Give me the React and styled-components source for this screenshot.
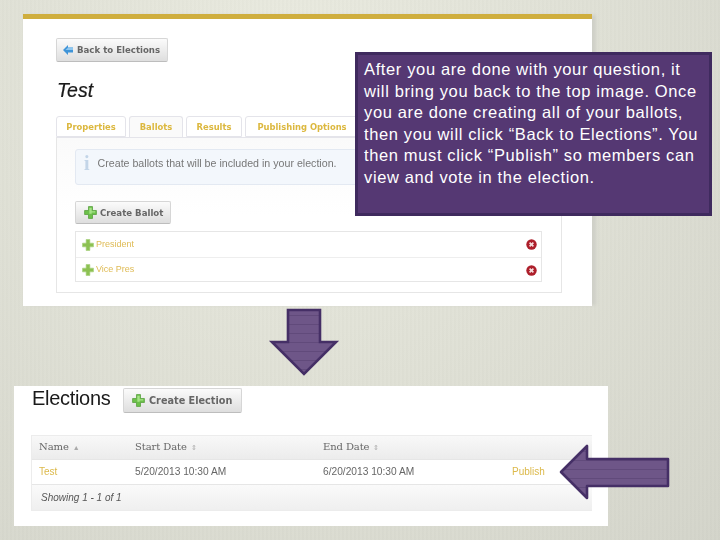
import React from "react";
import styled, { createGlobalStyle } from "styled-components";

const Global = createGlobalStyle`
  html, body { margin: 0; padding: 0; background: #dcddd2; }
  * { box-sizing: border-box; }
`;

const Slide = styled.div`
  position: relative;
  width: 720px;
  height: 540px;
  overflow: hidden;
  font-family: "Liberation Sans", Arial, sans-serif;
  background:
    repeating-linear-gradient(90deg, rgba(255,255,255,.025) 0 2px, rgba(0,0,0,.006) 2px 4px),
    radial-gradient(ellipse at 40% 12%, #e9eadf 0%, #dfe0d5 50%, #d3d4ca 100%);
`;

const TopShot = styled.section`
  position: absolute;
  left: 23px;
  top: 14px;
  width: 569px;
  height: 292px;
  background: #fff;
  border-top: 5px solid #cfae3e;
  padding: 19px 30px 0 33px;
  box-shadow: 5px 0 3px -1px #cfd0c8;
  filter: blur(0.3px);
`;

const Raised = styled.div`
  display: inline-flex;
  align-items: center;
  gap: ${p => p.$gap || 4}px;
  height: ${p => p.$h}px;
  width: ${p => p.$w}px;
  padding-left: ${p => p.$pad}px;
  border: 1px solid #d6d6d6;
  border-bottom-color: #bdbdbd;
  border-radius: 2px;
  background: linear-gradient(#fbfbfb, #dedede);
  color: #666;
  font-family: "DejaVu Sans", sans-serif;
  font-weight: 700;
  font-size: ${p => p.$fs || 8.6}px;
  white-space: nowrap;
`;

const Title = styled.h1`
  margin: 17px 0 0 1px;
  height: 37px;
  font: italic 400 19.5px/22px "Liberation Sans", sans-serif;
  -webkit-text-stroke: .2px #1a1a1a;
  color: #1a1a1a;
`;

const Tabs = styled.div`
  display: flex;
  height: 21px;
  gap: 3px;
`;

const Tab = styled.div`
  width: ${p => p.$w}px;
  border: 1px solid #e4e4ea;
  border-bottom: ${p => (p.$active ? "none" : "1px solid #e4e4ea")};
  border-radius: 3px 3px 0 0;
  background: ${p => (p.$active ? "#fafafa" : "#fff")};
  color: #dcb83f;
  font: 700 8.4px/20px "DejaVu Sans", sans-serif;
  text-align: center;
  white-space: nowrap;
`;

const TabBody = styled.div`
  width: 506px;
  height: 156px;
  border: 1px solid #e6e6e6;
  border-top: 1px solid #e4e4ea;
  background: linear-gradient(#fafafa, #fff 50%);
  padding: 11px 19px 0 18px;
`;

const Info = styled.div`
  display: flex;
  align-items: center;
  height: 36px;
  padding: 0 0 8px 8px;
  gap: 8px;
  border: 1px solid #e3e9f2;
  border-radius: 3px;
  background: #f3f7fc;
  color: #777;
  font-size: 10.65px;
  white-space: nowrap;
`;

const InfoMark = styled.span`
  color: #c3d5e8;
  font: 700 20px/20px "Liberation Serif", serif;
`;

const BallotButtonRow = styled.div`
  margin-top: 16px;
  height: 30px;
`;

const List = styled.div`
  border: 1px solid #e6e6e6;
  height: 51px;
  background: #fff;
`;

const ListRow = styled.div`
  display: flex;
  align-items: center;
  height: 25px;
  padding: 0 4px 0 6px;
  gap: 2px;
  color: #dfbb55;
  font-size: 9px;
  & + & { border-top: 1px solid #eeeeee; }
`;

const Grow = styled.span`
  flex: 1;
  padding-bottom: 2px;
`;

const Callout = styled.aside`
  position: absolute;
  left: 355px;
  top: 52px;
  width: 357px;
  height: 164px;
  background: #553873;
  border: 3px solid #3f2a5e;
  padding: 4px 0 0 6px;
  color: #fff;
  font-size: 16.5px;
  line-height: 21.6px;
  letter-spacing: .63px;
  white-space: pre;
`;

const BottomShot = styled.section`
  position: absolute;
  left: 14px;
  top: 386px;
  width: 594px;
  height: 140px;
  background: #fff;
  padding: 2px 16px 0 17px;
  filter: blur(0.3px);
`;

const Heading = styled.div`
  display: flex;
  align-items: flex-start;
  gap: 13px;
  height: 47px;
`;

const HeadTitle = styled.h2`
  margin: 0 0 0 1px;
  width: 78px;
  font: 400 20px/20px "Liberation Sans", sans-serif;
  letter-spacing: -.3px;
  color: #1a1a1a;
`;

const Table = styled.div`
  width: 561px;
  border: 1px solid #ececec;
  border-width: 1px 0 1px 1px;
`;

const Row = styled.div`
  display: grid;
  grid-template-columns: 96px 188px 189px 1fr;
  align-items: center;
  height: ${p => p.$h}px;
  padding: 0 0 2px 7px;
  background: ${p => p.$bg || "#fff"};
  border-bottom: ${p => (p.$line ? "1px solid #e6e6e6" : "none")};
`;

const HeadCell = styled.span`
  font: 400 10px "DejaVu Serif", serif;
  color: #666;
  letter-spacing: -.1px;
`;

const Sort = styled.span`
  color: #aaa;
  font: 400 7px "Liberation Sans", sans-serif;
  margin-left: 4px;
`;

const Cell = styled.span`
  font-size: ${p => (p.$link ? 10 : 10.2)}px;
  color: ${p => (p.$link ? "#dcb94a" : "#666")};
`;

const Footer = styled.div`
  height: 25px;
  padding: 0 0 1px 9px;
  display: flex;
  align-items: center;
  font: italic 400 10px "Liberation Sans", sans-serif;
  color: #555;
  background: linear-gradient(#fafafa, #efefef);
`;

const FreeSvg = styled.svg`
  position: absolute;
  left: ${p => p.$x}px;
  top: ${p => p.$y}px;
  overflow: visible;
`;

const Plus = ({ s = 13, soft }) => (
  <svg width={s} height={s} viewBox="0.5 0.5 11 11">
    <path d="M4.3 1h3.4v3.3H11v3.4H7.7V11H4.3V7.7H1V4.3h3.3z" fill={soft ? "#8cc152" : "#6cc04a"} stroke={soft ? "#a5cf7a" : "#4f9a35"} strokeWidth=".6" />
    {!soft && <path d="M5 2h2v3h3v1H7v1H5z" fill="#a6e388" />}
  </svg>
);

const BackArrow = () => (
  <svg width="10" height="10" viewBox="0 0 10 10">
    <path d="M0 5l5-5v2.5h5v5H5V10z" fill="#3f94d8" />
    <path d="M5 2.5h5V5H2.5z" fill="#8cc6f0" />
  </svg>
);

const Del = () => (
  <svg width="11" height="11" viewBox="0 0 11 11">
    <circle cx="5.5" cy="5.5" r="5.2" fill="#ad1f2b" />
    <path d="M3.6 3.6l3.8 3.8M7.4 3.6l-3.8 3.8" stroke="#f4dcdc" strokeWidth="1.7" />
  </svg>
);

const Weave = () => (
  <defs>
    <pattern id="weave" width="4" height="9" patternUnits="userSpaceOnUse">
      <rect width="4" height="9" fill="#6e5688" />
      <rect y="7" width="4" height="1" fill="#614a7b" />
    </pattern>
  </defs>
);

export default function App() {
  return (
    <Slide>
      <Global />
      <TopShot>
        <Raised $w={112} $h={24} $pad={6}><BackArrow />Back to Elections</Raised>
        <Title>Test</Title>
        <Tabs>
          <Tab $w={70}>Properties</Tab>
          <Tab $w={54} $active>Ballots</Tab>
          <Tab $w={56}>Results</Tab>
          <Tab $w={114}>Publishing Options</Tab>
        </Tabs>
        <TabBody>
          <Info><InfoMark>i</InfoMark>Create ballots that will be included in your election.</Info>
          <BallotButtonRow>
            <Raised $w={96} $h={23} $pad={8} $gap={3}><Plus />Create Ballot</Raised>
          </BallotButtonRow>
          <List>
            <ListRow><Plus s={12} soft /><Grow>President</Grow><Del /></ListRow>
            <ListRow><Plus s={12} soft /><Grow>Vice Pres</Grow><Del /></ListRow>
          </List>
        </TabBody>
      </TopShot>

      <BottomShot>
        <Heading>
          <HeadTitle>Elections</HeadTitle>
          <Raised $w={119} $h={25} $pad={8} $gap={4} $fs={9.7}><Plus />Create Election</Raised>
        </Heading>
        <Table>
          <Row $h={24} $bg="linear-gradient(#f8f8f8,#ececec)" $line>
            <HeadCell>Name<Sort>▲</Sort></HeadCell>
            <HeadCell>Start Date<Sort>⇕</Sort></HeadCell>
            <HeadCell>End Date<Sort>⇕</Sort></HeadCell>
            <span />
          </Row>
          <Row $h={25} $line>
            <Cell $link>Test</Cell>
            <Cell>5/20/2013 10:30 AM</Cell>
            <Cell>6/20/2013 10:30 AM</Cell>
            <Cell $link>Publish</Cell>
          </Row>
          <Footer>Showing 1 - 1 of 1</Footer>
        </Table>
      </BottomShot>

      <Callout>{"After you are done with your question, it\nwill bring you back to the top image. Once\nyou are done creating all of your ballots,\nthen you will click “Back to Elections”. You\nthen must click “Publish” so members can\nview and vote in the election."}</Callout>

      <FreeSvg $x={270} $y={308} width="68" height="68" viewBox="0 0 68 68">
        <Weave />
        <path d="M18 2h32v32h16L34 66 2 34h16z" fill="url(#weave)" stroke="#452f66" strokeWidth="2.6" strokeLinejoin="miter" />
      </FreeSvg>
      <FreeSvg $x={559} $y={444} width="111" height="56" viewBox="0 0 111 56">
        <Weave />
        <path d="M2 28L28 2v13h81v27H28v12z" fill="url(#weave)" stroke="#452f66" strokeWidth="2.6" strokeLinejoin="round" />
      </FreeSvg>
    </Slide>
  );
}
